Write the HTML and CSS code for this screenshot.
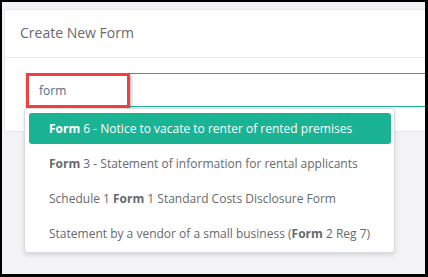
FILE: index.html
```html
<!DOCTYPE html>
<html lang="en">
<head>
    <meta charset="UTF-8">
    <title>Create New Form</title>
    <meta name="viewport" content="width=device-width, initial-scale=1.0">
    <link rel="stylesheet" href="styles.css">
</head>
<body>
    <div class="frame">
        <div class="ibox">
            <div class="ibox-title">
                <h5>Create New Form</h5>
            </div>
            <div class="ibox-content">
                <div class="search">
                    <input class="search-input" type="text" value="form">
                    <!-- annotation highlight -->
                    <div class="callout"></div>
                    <ul class="typeahead">
                        <li class="active"><b>Form</b> 6 - Notice to vacate to renter of rented premises</li>
                        <li><b>Form</b> 3 - Statement of information for rental applicants</li>
                        <li>Schedule 1 <b>Form</b> 1 Standard Costs Disclosure Form</li>
                        <li>Statement by a vendor of a small business (<b>Form</b> 2 Reg 7)</li>
                    </ul>
                </div>
            </div>
        </div>
    </div>
</body>
</html>
```

FILE: styles.css
```css
* {
    box-sizing: border-box;
}
body {
    margin: 0;
    font-family: "Open Sans", Arial, sans-serif;
    color: #676a6c;
}
.frame {
    width: 428px;
    height: 277px;
    border-style: solid;
    border-color: #000;
    border-width: 2px 3px 3px 2px;
    background: #f3f3f6;
    padding: 7px 0 0 2px;
    overflow: hidden;
}
.ibox {
    background: #fff;
    border: 1px solid #e7eaec;
    border-right: none;
}
.ibox-title {
    height: 48px;
    padding: 0 15px;
    display: flex;
    align-items: center;
    border-bottom: 1px solid #e7eaec;
}
.ibox-title h5 {
    margin: 0 0 2px;
    font-size: 14px;
    font-weight: 400;
    color: #676a6c;
}
.ibox-content {
    padding: 15px 0 24px 21px;
}
.search {
    position: relative;
}
.search-input {
    display: block;
    width: 100%;
    height: 34px;
    border: 1px solid #1ab394;
    border-right: none;
    padding: 0 12px;
    font-family: inherit;
    font-size: 12px;
    color: #4f6a86;
    outline: none;
}
.callout {
    position: absolute;
    left: 0;
    top: 0;
    width: 104px;
    height: 35px;
    border: 3px solid #f04040;
    box-shadow: 1px 2px 3px rgba(0,0,0,0.35);
}
.typeahead {
    position: absolute;
    left: -2px;
    top: 35px;
    width: 371px;
    margin: 0;
    padding: 4px 3px 3px 4px;
    list-style: none;
    background: #fff;
    border: 1px solid #d8dbe0;
    border-radius: 4px;
    box-shadow: 0 2px 4px rgba(0,0,0,0.12);
}
.typeahead li {
    height: 31px;
    line-height: 31px;
    margin-bottom: 4px;
    padding: 0 20px;
    font-size: 12px;
    color: #676a6c;
    white-space: nowrap;
    border-radius: 3px;
}
.typeahead li:last-child {
    margin-bottom: 0;
}
.typeahead li b {
    font-weight: 700;
}
.typeahead li.active {
    background: #1ab394;
    color: #fff;
}
```
